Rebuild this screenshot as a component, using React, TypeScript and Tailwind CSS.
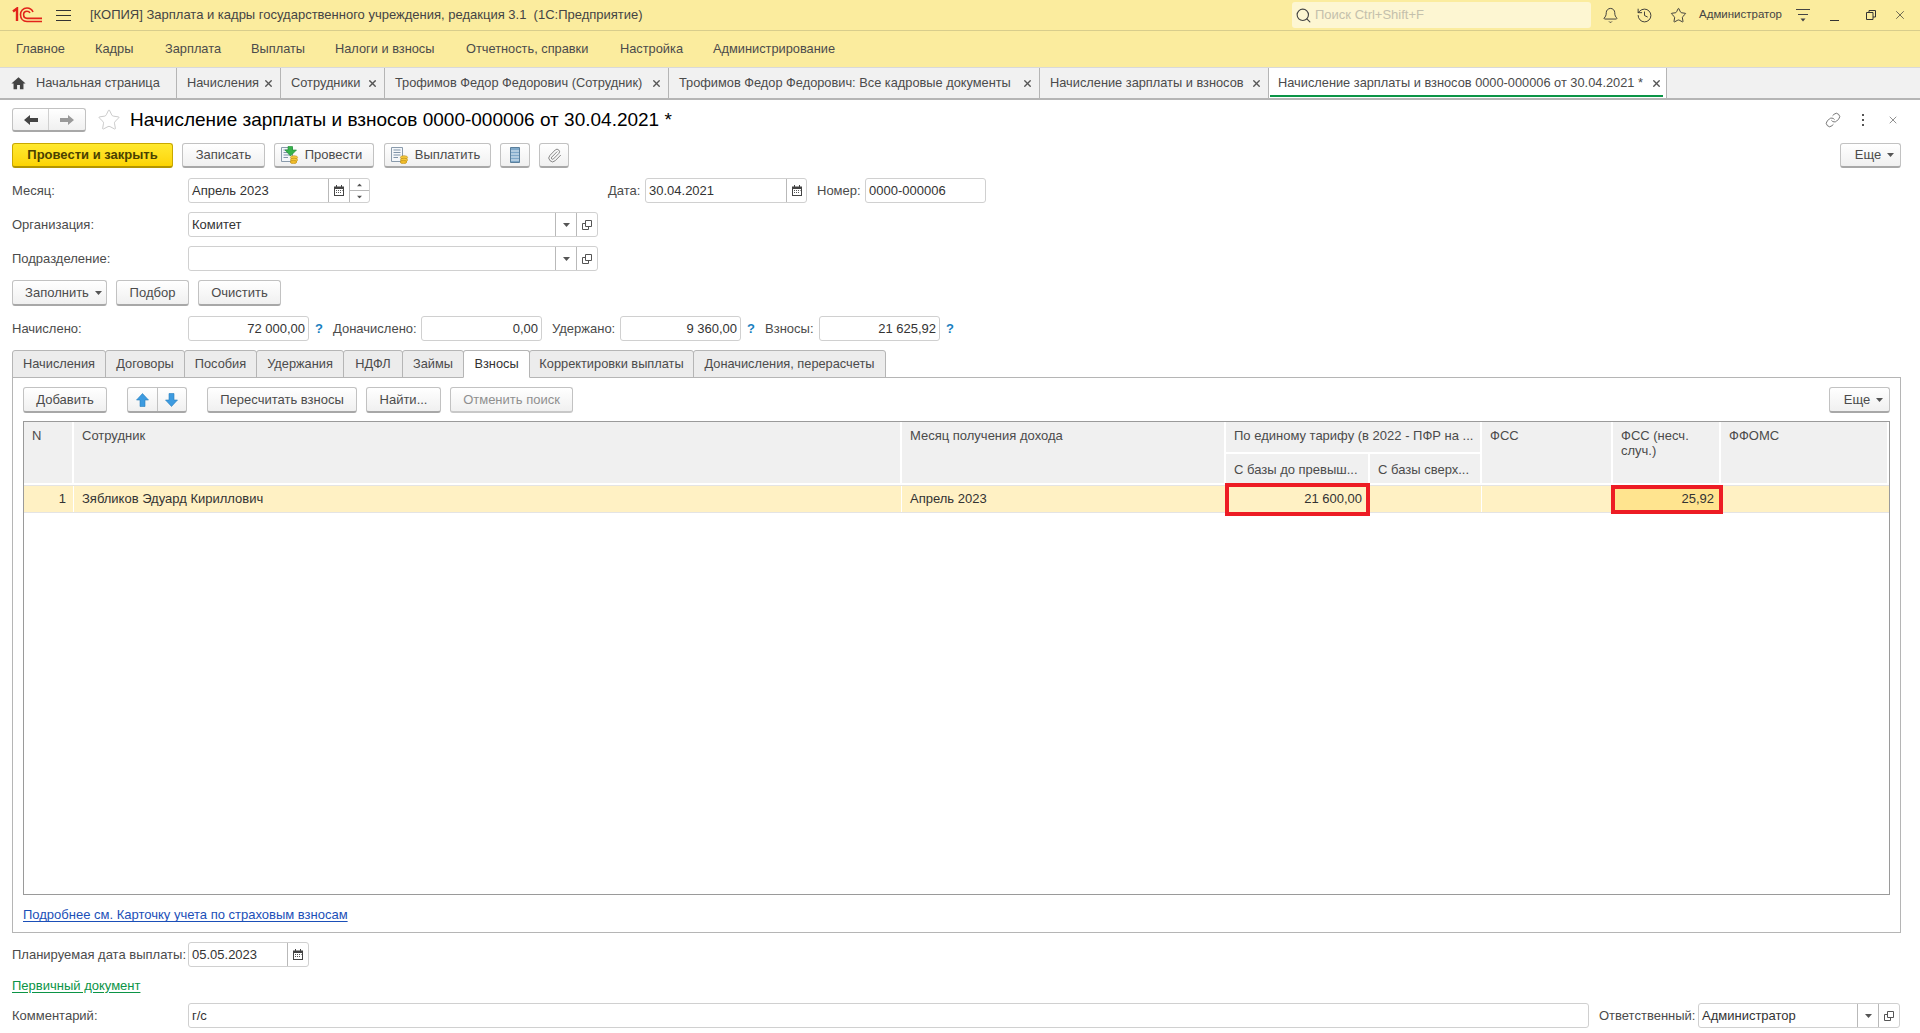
import React from 'react';
import { Bell, History, Star, Search, Link, X, Paperclip } from 'lucide-react';
import { MdHome } from 'react-icons/md';

const menuItems = [
  { label: 'Главное', cls: 'w-[79px]' },
  { label: 'Кадры', cls: 'w-[70px]' },
  { label: 'Зарплата', cls: 'w-[86px]' },
  { label: 'Выплаты', cls: 'w-[84px]' },
  { label: 'Налоги и взносы', cls: 'w-[131px]' },
  { label: 'Отчетность, справки', cls: 'w-[154px]' },
  { label: 'Настройка', cls: 'w-[93px]' },
  { label: 'Администрирование', cls: 'w-[140px]' },
];

const pageTabs = [
  { label: 'Начисления', cls: 'w-[104px]' },
  { label: 'Сотрудники', cls: 'w-[104px]' },
  { label: 'Трофимов Федор Федорович (Сотрудник)', cls: 'w-[284px]' },
  { label: 'Трофимов Федор Федорович: Все кадровые документы', cls: 'w-[371px]' },
  { label: 'Начисление зарплаты и взносов', cls: 'w-[229px]' },
];

const formTabs = [
  { label: 'Начисления', cls: 'w-[94px]' },
  { label: 'Договоры', cls: 'w-[80px]' },
  { label: 'Пособия', cls: 'w-[73px]' },
  { label: 'Удержания', cls: 'w-[88px]' },
  { label: 'НДФЛ', cls: 'w-[60px]' },
  { label: 'Займы', cls: 'w-[62px]' },
  { label: 'Взносы', cls: 'w-[67px]', active: true },
  { label: 'Корректировки выплаты', cls: 'w-[165px]' },
  { label: 'Доначисления, перерасчеты', cls: 'w-[193px]' },
];

function Logo() {
  return (
    <svg width="30" height="16" viewBox="0 0 30 16" fill="none" stroke="#e2231a">
      <path d="M1 4.5 L5 1.5 V14" strokeWidth="2.4" />
      <path d="M21 5 C20 2.5 18 1 15 1 C11 1 8.5 4 8.5 7.5 C8.5 11.5 11 14.5 15 14.5 H30" strokeWidth="1.6" />
      <path d="M18 6 C17.5 5 16.5 4.2 15 4.2 C13 4.2 11.6 5.6 11.6 7.6 C11.6 9.8 13 11.4 15 11.4 H30" strokeWidth="1.6" />
    </svg>
  );
}

function Caret({ className = 'fill-[#555]' }: { className?: string }) {
  return (
    <svg width="7" height="4" viewBox="0 0 7 4" className={className}>
      <path d="M0 0 H7 L3.5 4 Z" />
    </svg>
  );
}

function CalendarIcon() {
  return (
    <svg width="10" height="11" viewBox="0 0 10 11">
      <path d="M0 1.5 H2 V0 H3 V1.5 H7 V0 H8 V1.5 H10 V11 H0 Z" fill="#444" />
      <path d="M1 4 H9 V10 H1 Z" fill="#fff" />
      <path d="M2 5 H3 V6 H2 Z M4 5 H5 V6 H4 Z M6 5 H7 V6 H6 Z M8 5 H8.6 V6 H8 Z M2 7 H3 V8 H2 Z M4 7 H5 V8 H4 Z M6 7 H7 V8 H6 Z" fill="#555" />
    </svg>
  );
}

function OpenIcon() {
  return (
    <svg width="10" height="10" viewBox="0 0 10 10" fill="none" stroke="#555">
      <path d="M3.5 .5 H9.5 V6.5 H3.5 Z" />
      <path d="M3.5 3.5 H.5 V9.5 H6.5 V6.5" />
    </svg>
  );
}

function Arrow({ down }: { down?: boolean }) {
  return (
    <svg width="13" height="14" viewBox="0 0 13 14" className={down ? 'rotate-180' : ''}>
      <path d="M6.5 .5 L12.5 7 H9 V13.5 H4 V7 H.5 Z" fill="#3d9be0" stroke="#2a7fbe" strokeWidth="0.6" />
    </svg>
  );
}

function PostIcon({ pay }: { pay?: boolean }) {
  return (
    <svg width="18" height="18" viewBox="0 0 18 18">
      <path d="M.5 1.5 H11.5 V15.5 H.5 Z" fill="#f4f7fa" stroke="#8a9bac" />
      <path d="M2.5 4 H9.5 M2.5 6.5 H9.5 M2.5 9 H9.5 M2.5 11.5 H7" stroke="#7f93a8" />
      {!pay && <path d="M7 .5 H11.5 V4 H15.5 L9.5 10 L4 4 H7 Z" fill="#35b34a" stroke="#1f8a33" strokeWidth="0.6" />}
      <ellipse cx="13" cy="11.5" rx="3.6" ry="1.8" fill="#f6c93b" stroke="#b98a12" strokeWidth="0.6" />
      <ellipse cx="13" cy="14" rx="3.6" ry="1.8" fill="#f6c93b" stroke="#b98a12" strokeWidth="0.6" />
      <ellipse cx="12.5" cy="16" rx="3.3" ry="1.6" fill="#f2bd2a" stroke="#b98a12" strokeWidth="0.6" />
    </svg>
  );
}

function ListIcon() {
  return (
    <svg width="10" height="16" viewBox="0 0 10 16">
      <path d="M.5 .5 H9.5 V15.5 H.5 Z" fill="#7fa8c9" stroke="#5a7f9c" />
      <path d="M1 4 H9 M1 7 H9 M1 10 H9 M1 13 H9" stroke="#e8f0f6" />
    </svg>
  );
}

function Btn({
  className,
  children,
  disabled,
}: {
  className: string;
  children: React.ReactNode;
  disabled?: boolean;
}) {
  return (
    <div
      className={`flex items-center justify-center gap-[6px] rounded-[3px] border border-[#c2c2c2] border-b-2 border-b-[#a8a8a8] bg-linear-to-b from-white to-[#f0f0f0] ${
        disabled ? 'text-[#8f8f8f]' : 'text-[#4b4b4b]'
      } ${className}`}
    >
      {children}
    </div>
  );
}

function Field({
  className,
  children,
  right,
}: {
  className: string;
  children?: React.ReactNode;
  right?: boolean;
}) {
  return (
    <div
      className={`flex h-[25px] items-center rounded-[3px] border border-[#d0d0d0] bg-white text-[#333] ${
        right ? 'justify-end pr-[3px]' : 'pl-[3px]'
      } ${className}`}
    >
      {children}
    </div>
  );
}

function Side({ className, children }: { className: string; children: React.ReactNode }) {
  return <div className={`flex h-full shrink-0 items-center justify-center border-l border-[#b9b9b9] ${className}`}>{children}</div>;
}

function Hint({ className }: { className: string }) {
  return <span className={`font-bold text-[#1a7fc0] ${className}`}>?</span>;
}

function HeadCell({ className, children }: { className: string; children?: React.ReactNode }) {
  return (
    <div className={`overflow-hidden border-r-2 border-b-2 border-white bg-[#f0f0f0] pl-[8px] pt-[6px] leading-[15px] text-[#4b4b4b] ${className}`}>
      {children}
    </div>
  );
}

export default function App() {
  return (
    <div className="flex h-[1033px] w-[1920px] flex-col overflow-hidden bg-white text-[13px] text-[#4b4b4b] font-['Liberation_Sans',Arial,sans-serif]">
      <div className="flex h-[31px] shrink-0 items-center border-b border-[#d8cd8c] bg-[#fbec9e]">
        <div className="ml-3 flex w-[44px] shrink-0"><Logo /></div>
        <div className="flex w-[34px] shrink-0 flex-col gap-[4px]">
          <div className="h-px w-[15px] bg-[#333]" />
          <div className="h-px w-[15px] bg-[#333]" />
          <div className="h-px w-[15px] bg-[#333]" />
        </div>
        <div className="w-[1202px] whitespace-pre text-[#444]">[КОПИЯ] Зарплата и кадры государственного учреждения, редакция 3.1  (1С:Предприятие)</div>
        <div className="flex h-[26px] w-[299px] shrink-0 items-center gap-[3px] rounded-[3px] bg-[#fdf6d2] pl-[3px] text-[#c4c0ac]">
          <Search size={17} className="text-[#444]" strokeWidth={1.6} />
          <span>Поиск Ctrl+Shift+F</span>
        </div>
        <Bell size={17} strokeWidth={1.3} className="ml-[11px] text-[#333]" />
        <History size={17} strokeWidth={1.3} className="ml-[17px] text-[#333]" />
        <Star size={17} strokeWidth={1.3} className="ml-[17px] text-[#333]" />
        <span className="ml-[12px] w-[84px] whitespace-nowrap text-[11.5px] text-[#444]">Администратор</span>
        <svg width="16" height="14" viewBox="0 0 16 14" className="ml-[12px]" stroke="#444" fill="none">
          <path d="M1 1.5 H15 M3 6.5 H13" />
          <path d="M5.5 10.5 H10.5 L8 13.5 Z" fill="#444" stroke="none" />
        </svg>
        <div className="ml-[19px] mt-[10px] h-px w-[9px] bg-[#333]" />
        <svg width="10" height="10" viewBox="0 0 10 10" fill="none" stroke="#333" className="ml-[27px]">
          <path d="M3 2.5 V.5 H9.5 V7 H7" />
          <path d="M.5 2.5 H7 V9.5 H.5 Z" />
        </svg>
        <X size={14} strokeWidth={1.2} className="ml-[17px] text-[#333]" />
      </div>

      <div className="flex h-[36px] shrink-0 items-center bg-[#fbec9e] pl-[16px] text-[12.8px]">
        {menuItems.map((item) => (
          <div key={item.label} className={`shrink-0 text-[#4b4b4b] ${item.cls}`}>{item.label}</div>
        ))}
      </div>

      <div className="flex h-[33px] shrink-0 items-stretch border-t border-[#d9d9d9] border-b-2 border-b-[#b5b5b5] bg-[#f1f1f1] text-[12.8px]">
        <div className="flex w-[177px] items-center border-r border-[#b5b5b5] pl-[10px]">
          <MdHome size={17} className="text-[#444]" />
          <span className="ml-[9px]">Начальная страница</span>
        </div>
        {pageTabs.map((tab) => (
          <div key={tab.label} className={`flex items-center justify-between whitespace-nowrap border-r border-[#b5b5b5] pl-[10px] pr-[6px] ${tab.cls}`}>
            <span>{tab.label}</span>
            <X size={11} strokeWidth={3} className="shrink-0 text-[#555]" />
          </div>
        ))}
        <div className="relative flex w-[398px] items-center justify-between whitespace-nowrap border-r border-[#b5b5b5] bg-white pl-[9px] pr-[4px]">
          <span>Начисление зарплаты и взносов 0000-000006 от 30.04.2021 *</span>
          <X size={11} strokeWidth={3} className="shrink-0 text-[#555]" />
          <div className="absolute bottom-[1px] left-[1px] right-[3px] h-[2px] bg-[#0b9446]" />
        </div>
      </div>

      <div className="flex min-h-0 flex-1 flex-col pb-[5px] pl-3 pr-[19px]">
        <div className="mt-[8px] flex h-[24px] shrink-0 items-center">
          <div className="flex h-[24px] w-[74px] items-stretch rounded-[3px] border border-[#c2c2c2] border-b-2 border-b-[#a8a8a8] bg-linear-to-b from-white to-[#f0f0f0]">
            <div className="flex w-[36px] items-center justify-center border-r border-[#d0d0d0]">
              <svg width="14" height="10" viewBox="0 0 14 10"><path d="M0 5 L6 0 V3 H14 V7 H6 V10 Z" fill="#444" /></svg>
            </div>
            <div className="flex flex-1 items-center justify-center">
              <svg width="14" height="10" viewBox="0 0 14 10"><path d="M14 5 L8 0 V3 H0 V7 H8 V10 Z" fill="#9a9a9a" /></svg>
            </div>
          </div>
          <Star size={24} strokeWidth={0.8} className="ml-[11px] text-[#bdbdbd]" />
          <div className="ml-[9px] whitespace-nowrap pt-[1px] text-[19px] text-black">Начисление зарплаты и взносов 0000-000006 от 30.04.2021 *</div>
          <div className="ml-auto flex items-center">
            <Link size={16} strokeWidth={1.2} className="text-[#555]" />
            <div className="ml-[21px] flex flex-col gap-[3px]">
              <div className="h-[2px] w-[2px] bg-[#555]" />
              <div className="h-[2px] w-[2px] bg-[#555]" />
              <div className="h-[2px] w-[2px] bg-[#555]" />
            </div>
            <X size={12} strokeWidth={1.3} className="ml-[23px] mr-[2px] text-[#555]" />
          </div>
        </div>

        <div className="mt-[11px] flex h-[25px] shrink-0 items-stretch">
          <div className="flex w-[161px] items-center justify-center rounded-[3px] border border-[#c9a800] border-b-2 border-b-[#b39500] bg-linear-to-b from-[#ffe92e] to-[#fdd400] font-bold text-[#4a4100]">
            Провести и закрыть
          </div>
          <Btn className="ml-[9px] w-[83px]">Записать</Btn>
          <Btn className="ml-[9px] w-[100px] pr-[5px]"><PostIcon />Провести</Btn>
          <Btn className="ml-[10px] w-[107px] pr-[4px]"><PostIcon pay />Выплатить</Btn>
          <Btn className="ml-[9px] w-[30px]"><ListIcon /></Btn>
          <Btn className="ml-[9px] w-[30px]"><Paperclip size={15} strokeWidth={1.4} className="text-[#777]" /></Btn>
          <Btn className="ml-auto w-[61px] pl-[8px]">Еще <Caret /></Btn>
        </div>

        <div className="mt-[10px] flex shrink-0 items-center">
          <span className="w-[176px] shrink-0">Месяц:</span>
          <Field className="w-[182px]">
            <span className="flex-1">Апрель 2023</span>
            <Side className="w-[21px]"><CalendarIcon /></Side>
            <div className="flex h-full w-[20px] shrink-0 flex-col border-l border-[#b9b9b9]">
              <div className="flex flex-1 items-center justify-center border-b border-[#b9b9b9]"><Caret className="rotate-180 scale-75 fill-[#555]" /></div>
              <div className="flex flex-1 items-center justify-center"><Caret className="scale-75 fill-[#555]" /></div>
            </div>
          </Field>
          <span className="ml-[238px] w-[37px] shrink-0">Дата:</span>
          <Field className="w-[162px] border-[#9a9a9a]">
            <span className="flex-1">30.04.2021</span>
            <Side className="w-[20px]"><CalendarIcon /></Side>
          </Field>
          <span className="ml-[10px] w-[48px] shrink-0">Номер:</span>
          <Field className="w-[121px]">0000-000006</Field>
        </div>

        <div className="mt-[9px] flex shrink-0 items-center">
          <span className="w-[176px] shrink-0">Организация:</span>
          <Field className="w-[410px]">
            <span className="flex-1">Комитет</span>
            <Side className="w-[21px]"><Caret /></Side>
            <Side className="w-[21px]"><OpenIcon /></Side>
          </Field>
        </div>

        <div className="mt-[9px] flex shrink-0 items-center">
          <span className="w-[176px] shrink-0">Подразделение:</span>
          <Field className="w-[410px]">
            <span className="flex-1" />
            <Side className="w-[21px]"><Caret /></Side>
            <Side className="w-[21px]"><OpenIcon /></Side>
          </Field>
        </div>

        <div className="mt-[9px] flex h-[26px] shrink-0 items-stretch gap-[9px]">
          <Btn className="w-[95px] gap-[3px] pl-[8px]">Заполнить <Caret /></Btn>
          <Btn className="w-[73px]">Подбор</Btn>
          <Btn className="w-[83px]">Очистить</Btn>
        </div>

        <div className="mt-[10px] flex shrink-0 items-center">
          <span className="w-[176px] shrink-0">Начислено:</span>
          <Field right className="w-[121px]">72 000,00</Field>
          <Hint className="ml-[6px] w-[18px]" />
          <span className="w-[88px] shrink-0 whitespace-nowrap">Доначислено:</span>
          <Field right className="w-[121px]">0,00</Field>
          <span className="ml-[10px] w-[68px] shrink-0">Удержано:</span>
          <Field right className="w-[121px]">9 360,00</Field>
          <Hint className="ml-[6px] w-[18px]" />
          <span className="w-[54px] shrink-0">Взносы:</span>
          <Field right className="w-[121px]">21 625,92</Field>
          <Hint className="ml-[6px]" />
        </div>

        <div className="mt-[9px] flex h-[28px] shrink-0 items-stretch text-[12.8px]">
          {formTabs.map((tab) => (
            <div
              key={tab.label}
              className={`-mr-px flex shrink-0 items-center justify-center whitespace-nowrap rounded-t-[3px] border border-[#b5b5b5] ${
                tab.active ? 'z-10 border-b-white bg-white text-[#333]' : 'bg-[#ececec]'
              } ${tab.cls}`}
            >
              {tab.label}
            </div>
          ))}
        </div>

        <div className="-mt-px flex min-h-0 flex-1 flex-col border border-[#b5b5b5] px-[10px]">
          <div className="mt-[9px] flex h-[26px] shrink-0 items-stretch">
            <Btn className="w-[84px]">Добавить</Btn>
            <div className="ml-[20px] flex w-[60px] items-stretch rounded-[3px] border border-[#c2c2c2] border-b-2 border-b-[#a8a8a8] bg-linear-to-b from-white to-[#f0f0f0]">
              <div className="flex flex-1 items-center justify-center border-r border-[#c2c2c2]"><Arrow /></div>
              <div className="flex flex-1 items-center justify-center"><Arrow down /></div>
            </div>
            <Btn className="ml-[20px] w-[150px]">Пересчитать взносы</Btn>
            <Btn className="ml-[9px] w-[75px]">Найти...</Btn>
            <Btn disabled className="ml-[9px] w-[123px] border-b-[#c8c8c8]">Отменить поиск</Btn>
            <Btn className="ml-auto w-[61px] pl-[8px]">Еще <Caret /></Btn>
          </div>

          <div className="mt-[8px] flex min-h-0 flex-1 flex-col border border-[#9a9a9a]">
            <div className="grid shrink-0 grid-cols-[50px_828px_324px_144px_112px_131px_108px_168px] grid-rows-[32px_31px]">
              <HeadCell className="row-span-2">N</HeadCell>
              <HeadCell className="row-span-2">Сотрудник</HeadCell>
              <HeadCell className="row-span-2">Месяц получения дохода</HeadCell>
              <HeadCell className="col-span-2 truncate">По единому тарифу (в 2022 - ПФР на ...</HeadCell>
              <HeadCell className="row-span-2">ФСС</HeadCell>
              <HeadCell className="row-span-2">ФСС (несч. случ.)</HeadCell>
              <HeadCell className="row-span-2">ФФОМС</HeadCell>
              <HeadCell className="truncate pt-[8px]">С базы до превыш...</HeadCell>
              <HeadCell className="truncate pt-[8px]">С базы сверх...</HeadCell>
            </div>
            <div className="grid h-[28px] shrink-0 grid-cols-[50px_828px_324px_144px_112px_131px_108px_168px] border-y border-[#e4e4e4] bg-[#fff1c4] text-[#333]">
              <div className="flex items-center justify-end border-r border-white pr-[7px]">1</div>
              <div className="flex items-center border-r border-white pl-[8px]">Зябликов Эдуард Кириллович</div>
              <div className="flex items-center border-r border-white pl-[8px]">Апрель 2023</div>
              <div className="relative flex items-center justify-end border-r border-white pr-[7px]">
                21 600,00
                <div className="absolute -bottom-[4px] -left-[1px] -right-[1px] -top-[3px] z-10 border-4 border-[#ed1c24]" />
              </div>
              <div className="border-r border-white" />
              <div className="border-r border-white" />
              <div className="relative flex items-center justify-end bg-[#ffe48f] pr-[7px]">
                25,92
                <div className="absolute -bottom-[2px] -left-[2px] -right-[2px] -top-[1px] z-10 border-4 border-[#ed1c24]" />
              </div>
              <div />
            </div>
          </div>

          <div className="flex h-[37px] shrink-0 items-center pt-[3px]">
            <span className="text-[#1b4fb8] underline underline-offset-2">Подробнее см. Карточку учета по страховым взносам</span>
          </div>
        </div>

        <div className="mt-[9px] flex shrink-0 items-center">
          <span className="w-[176px] shrink-0 whitespace-nowrap">Планируемая дата выплаты:</span>
          <Field className="w-[121px]">
            <span className="flex-1">05.05.2023</span>
            <Side className="w-[21px]"><CalendarIcon /></Side>
          </Field>
        </div>

        <div className="mt-[11px] flex h-[15px] shrink-0 items-center text-[#0b9446] underline underline-offset-2">Первичный документ</div>

        <div className="mt-[10px] flex shrink-0 items-center">
          <span className="w-[176px] shrink-0">Комментарий:</span>
          <Field className="w-[1401px] border-[#9a9a9a]">г/с</Field>
          <span className="ml-[10px] w-[99px] shrink-0 whitespace-nowrap">Ответственный:</span>
          <Field className="w-[202px] border-[#9a9a9a]">
            <span className="flex-1">Администратор</span>
            <Side className="w-[21px]"><Caret /></Side>
            <Side className="w-[21px]"><OpenIcon /></Side>
          </Field>
        </div>
      </div>
    </div>
  );
}
